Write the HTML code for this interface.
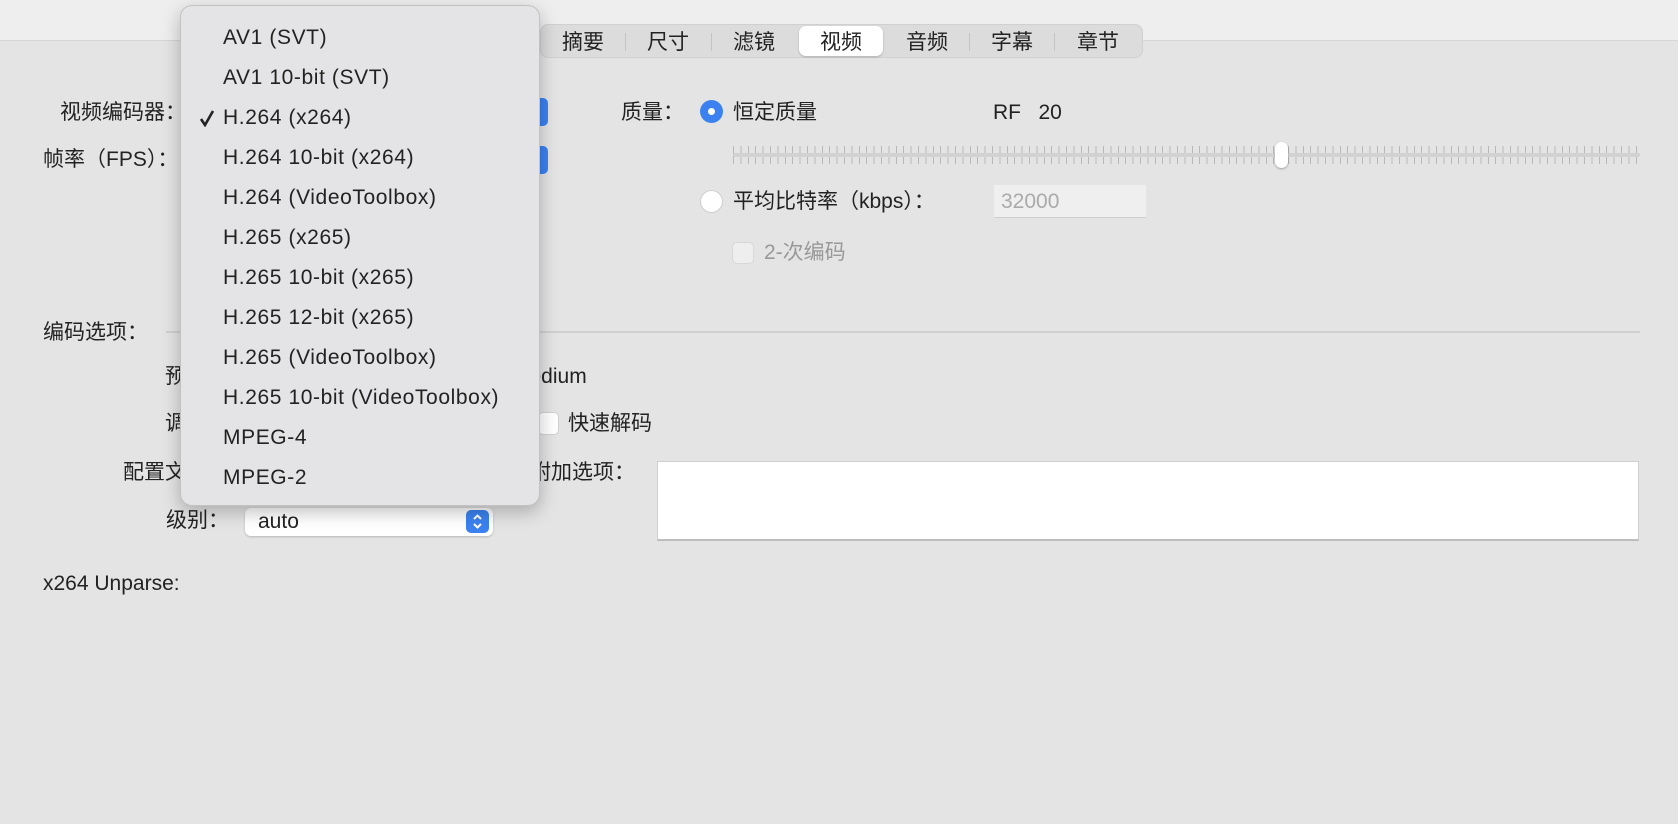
<!DOCTYPE html>
<html><head><meta charset="utf-8"><style>
*{margin:0;padding:0;box-sizing:border-box}
body{width:1678px;height:824px;background:#e4e4e4;font-family:"Liberation Sans","Noto Sans CJK SC",sans-serif;color:#222;position:relative;overflow:hidden;font-size:21px}
.top{position:absolute;left:0;top:0;width:1678px;height:41px;background:#eeeeee;border-bottom:1px solid #d6d6d6}
.a{position:absolute;white-space:nowrap;line-height:1}
.tabs{position:absolute;left:540px;top:24px;width:603px;height:34px;background:#dcdcdc;border-radius:8px;border:1px solid #d0d0d0}
.tab{position:absolute;top:6px;font-size:21px;line-height:1.1;transform:translateX(-50%)}
.sep{position:absolute;top:8px;width:1px;height:18px;background:#c4c4c4}
.radio{position:absolute;width:23px;height:23px;border-radius:50%}
.menu{position:absolute;left:180px;top:5px;width:360px;height:501px;background:#e4e4e6;border:1px solid #c2c2c2;border-radius:12px;box-shadow:0 6px 18px rgba(0,0,0,.25)}
.mi{position:absolute;left:42px;font-size:21px;letter-spacing:0.6px;color:#222;white-space:nowrap;line-height:1}
.blue{position:absolute;background:#3b82f0;border-radius:5px}
</style></head><body>
<div class="top"></div>
<div class="tabs">
<div class="tab" style="left:42px">摘要</div><div class="sep" style="left:84px"></div>
<div class="tab" style="left:127px">尺寸</div><div class="sep" style="left:170px"></div>
<div style="position:absolute;left:258px;top:1px;width:84px;height:30px;background:#fff;border-radius:7px;box-shadow:0 1px 2px rgba(0,0,0,.2)"></div>
<div class="tab" style="left:213px">滤镜</div>
<div class="tab" style="left:300px">视频</div>
<div class="tab" style="left:386px">音频</div><div class="sep" style="left:428px"></div>
<div class="tab" style="left:471px">字幕</div><div class="sep" style="left:513px"></div>
<div class="tab" style="left:557px">章节</div>
</div>

<div class="a" style="left:60px;top:102px">视频编码器：</div>
<div class="a" style="left:43px;top:149px">帧率（FPS）：</div>
<div class="blue" style="left:534px;top:98px;width:14px;height:28px"></div>
<div class="blue" style="left:534px;top:146px;width:14px;height:28px"></div>

<div class="a" style="left:621px;top:102px">质量：</div>
<div class="radio" style="left:700px;top:100px;background:#3b82f0"><div style="position:absolute;left:8px;top:8px;width:7px;height:7px;border-radius:50%;background:#fff"></div></div>
<div class="a" style="left:733px;top:102px">恒定质量</div>
<div class="a" style="left:993px;top:102px">RF&nbsp;&nbsp;&nbsp;20</div>
<div style="position:absolute;left:733px;top:146px;width:907px;height:18px;background:repeating-linear-gradient(90deg,#b8b8b8 0 1px,transparent 1px 7.4px)"></div>
<div style="position:absolute;left:733px;top:153px;width:907px;height:4px;background:#d2d2d2;border-radius:2px"></div>
<div style="position:absolute;left:1275px;top:142px;width:13px;height:26px;background:#fff;border-radius:7px;box-shadow:0 1px 2px rgba(0,0,0,.3)"></div>

<div class="radio" style="left:700px;top:190px;background:#fff;border:1px solid #cfcfcf"></div>
<div class="a" style="left:733px;top:191px">平均比特率（kbps）：</div>
<div style="position:absolute;left:994px;top:185px;width:152px;height:33px;background:#efefef;border-bottom:1px solid #d0d0d0"></div>
<div class="a" style="left:1001px;top:191px;color:#aaa">32000</div>
<div style="position:absolute;left:732px;top:242px;width:22px;height:22px;background:#eee;border:1px solid #d8d8d8;border-radius:5px"></div>
<div class="a" style="left:764px;top:242px;color:#999">2-次编码</div>

<div class="a" style="left:43px;top:322px">编码选项：</div>
<div style="position:absolute;left:166px;top:331px;width:1474px;height:2px;background:#d0d0d0"></div>
<div class="a" style="left:165px;top:366px">预设：</div>
<div class="a" style="left:512px;top:366px">Medium</div>
<div class="a" style="left:165px;top:413px">调优：</div>
<div style="position:absolute;left:538px;top:412px;width:21px;height:23px;background:#fff;border:1px solid #d0d0d0;border-radius:5px"></div>
<div class="a" style="left:568px;top:413px">快速解码</div>
<div class="a" style="left:123px;top:462px">配置文件：</div>
<div class="a" style="left:530px;top:462px">附加选项：</div>
<div style="position:absolute;left:657px;top:461px;width:982px;height:80px;background:#fff;border:1px solid #d0d0d0;border-bottom:2px solid #bdbdbd"></div>
<div class="a" style="left:166px;top:510px">级别：</div>
<div style="position:absolute;left:245px;top:508px;width:248px;height:28px;background:#fff;border-radius:6px;box-shadow:0 1px 2px rgba(0,0,0,.2)"></div>
<div class="a" style="left:258px;top:511px;font-size:21px">auto</div>
<div class="blue" style="left:466px;top:510px;width:23px;height:23px"><svg width="23" height="23" viewBox="0 0 23 23"><path d="M8 9l3.5-3.5L15 9M8 14l3.5 3.5L15 14" stroke="#fff" stroke-width="2" fill="none"/></svg></div>
<div class="a" style="left:43px;top:573px">x264 Unparse:</div>

<div class="menu">
<div class="mi" style="top:21px">AV1 (SVT)</div>
<div class="mi" style="top:61px">AV1 10-bit (SVT)</div>
<svg style="position:absolute;left:18px;top:103px" width="16" height="18" viewBox="0 0 16 18"><path d="M2 10l4 6L14 2" stroke="#222" stroke-width="2.6" fill="none"/></svg>
<div class="mi" style="top:101px">H.264 (x264)</div>
<div class="mi" style="top:141px">H.264 10-bit (x264)</div>
<div class="mi" style="top:181px">H.264 (VideoToolbox)</div>
<div class="mi" style="top:221px">H.265 (x265)</div>
<div class="mi" style="top:261px">H.265 10-bit (x265)</div>
<div class="mi" style="top:301px">H.265 12-bit (x265)</div>
<div class="mi" style="top:341px">H.265 (VideoToolbox)</div>
<div class="mi" style="top:381px">H.265 10-bit (VideoToolbox)</div>
<div class="mi" style="top:421px">MPEG-4</div>
<div class="mi" style="top:461px">MPEG-2</div>
</div>
</body></html>
